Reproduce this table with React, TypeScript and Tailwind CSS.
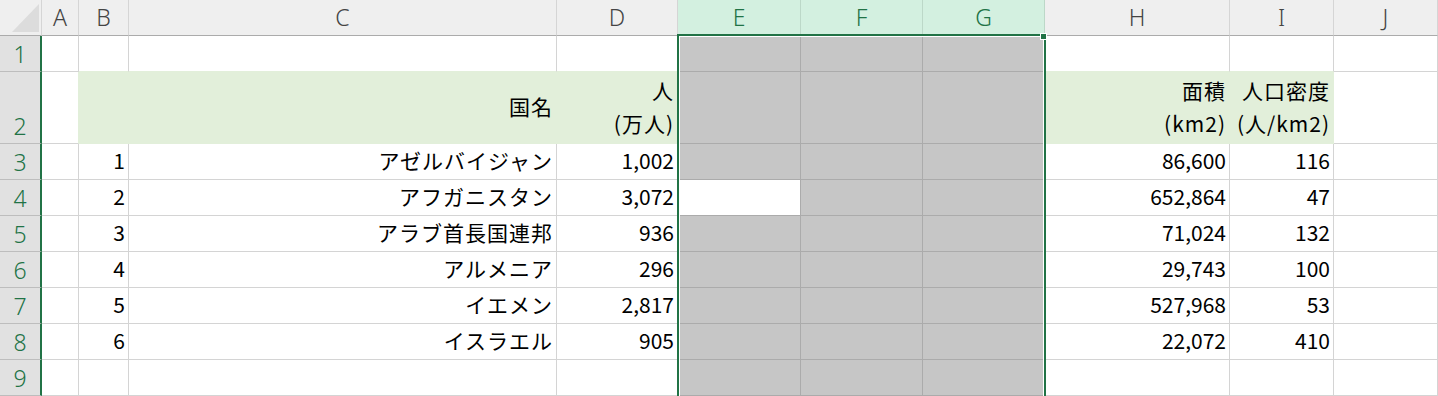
import React from 'react';

const COLS = ['A', 'B', 'C', 'D', 'E', 'F', 'G', 'H', 'I', 'J'];
const SELECTED = ['E', 'F', 'G'];
const BAND = ['B', 'C', 'D', 'H', 'I'];

type Cell = string | string[];

const data: Record<number, Record<string, Cell>> = {
  2: { C: '国名', D: ['人', '(万人)'], H: ['面積', '(km2)'], I: ['人口密度', '(人/km2)'] },
  3: { B: '1', C: 'アゼルバイジャン', D: '1,002', H: '86,600', I: '116' },
  4: { B: '2', C: 'アフガニスタン', D: '3,072', H: '652,864', I: '47' },
  5: { B: '3', C: 'アラブ首長国連邦', D: '936', H: '71,024', I: '132' },
  6: { B: '4', C: 'アルメニア', D: '296', H: '29,743', I: '100' },
  7: { B: '5', C: 'イエメン', D: '2,817', H: '527,968', I: '53' },
  8: { B: '6', C: 'イスラエル', D: '905', H: '22,072', I: '410' },
};

const ROWS = [1, 2, 3, 4, 5, 6, 7, 8, 9];

function cellClass(row: number, col: string) {
  const inBand = row === 2 && BAND.includes(col);
  const selected = SELECTED.includes(col);
  const active = selected && col === 'E' && row === 4;

  if (inBand) return 'bg-[#e2efda] border-r border-b border-[#e2efda]';
  if (active) return 'bg-white border-r border-b border-[#ababab]';
  if (selected) return 'bg-[#c6c6c6] border-r border-b border-[#ababab]';
  // cells touching the green band lose their line
  if (row === 1 && BAND.includes(col)) return 'bg-white border-r border-b border-r-[#d4d4d4] border-b-[#e2efda]';
  if (row === 2 && col === 'A') return 'bg-white border-r border-b border-r-[#e2efda] border-b-[#d4d4d4]';
  return 'bg-white border-r border-b border-[#d4d4d4]';
}

function CellBody({ row, col }: { row: number; col: string }) {
  const v = data[row]?.[col];
  if (!v) return null;
  if (Array.isArray(v)) {
    return (
      <div className="flex h-full flex-col items-end justify-end pr-[3px] pb-[3px] leading-[33px]">
        {v.map((line) => (
          <span key={line} className="tracking-[1px]">{line}</span>
        ))}
      </div>
    );
  }
  return (
    <div
      className={
        col === 'C'
          ? 'flex h-full items-center justify-end pr-[3px] pb-[2px] leading-none tracking-[1px]'
          : 'flex h-full items-center justify-end pr-[3px] pb-[2px] leading-none'
      }
    >
      {v}
    </div>
  );
}

export default function App() {
  return (
    <div className="relative h-[396px] w-[1438px] overflow-hidden bg-white font-['Noto_Sans_CJK_JP',sans-serif] text-[21px] text-black">
      <div className="grid grid-cols-[42px_37px_50px_428px_121px_123px_122px_122px_185px_104px_104px] grid-rows-[36px_36px_72px_36px_36px_36px_36px_36px_36px_36px]">
        {/* Corner */}
        <div className="relative border-r border-b border-r-[#d5d5d5] border-b-[#ababab] bg-[#efefef]">
          <svg className="absolute left-[12px] top-[4px]" width="27" height="28" viewBox="0 0 27 28">
            <polygon points="27,0 27,28 0,28" fill="#dcdcdc" />
          </svg>
        </div>

        {/* Column headers */}
        {COLS.map((c) =>
          SELECTED.includes(c) ? (
            <div
              key={c}
              className="flex items-center justify-center border-r border-b-2 border-r-[#bcd8c8] border-b-[#217346] bg-[#d3f0e0] font-['Noto_Sans',sans-serif] text-[23px] font-light text-[#217346]"
            >
              {c}
            </div>
          ) : (
            <div
              key={c}
              className="flex items-center justify-center border-r border-b border-r-[#d5d5d5] border-b-[#ababab] bg-[#efefef] font-['Noto_Sans',sans-serif] text-[23px] font-light text-[#444]"
            >
              {c}
            </div>
          )
        )}

        {ROWS.map((r) => (
          <React.Fragment key={r}>
            <div className="flex items-end justify-center border-r-2 border-b border-r-[#217346] border-b-[#bdbdbd] bg-[#e1e1e1] pb-[5px] font-['Noto_Sans',sans-serif] text-[23px] font-light leading-none text-[#217346]">
              {r}
            </div>
            {COLS.map((c) => (
              <div key={c} className={cellClass(r, c)}>
                <CellBody row={r} col={c} />
              </div>
            ))}
          </React.Fragment>
        ))}
      </div>

      {/* Selection outline E:G */}
      <div className="pointer-events-none absolute left-[677px] top-[34px] h-[380px] w-[369px] border-2 border-[#217346] shadow-[inset_0_0_0_1px_#ffffff]" />
      {/* Fill handle */}
      <div className="pointer-events-none absolute left-[1040px] top-[33px] h-[7px] w-[7px] border border-white bg-[#217346]" />
    </div>
  );
}
